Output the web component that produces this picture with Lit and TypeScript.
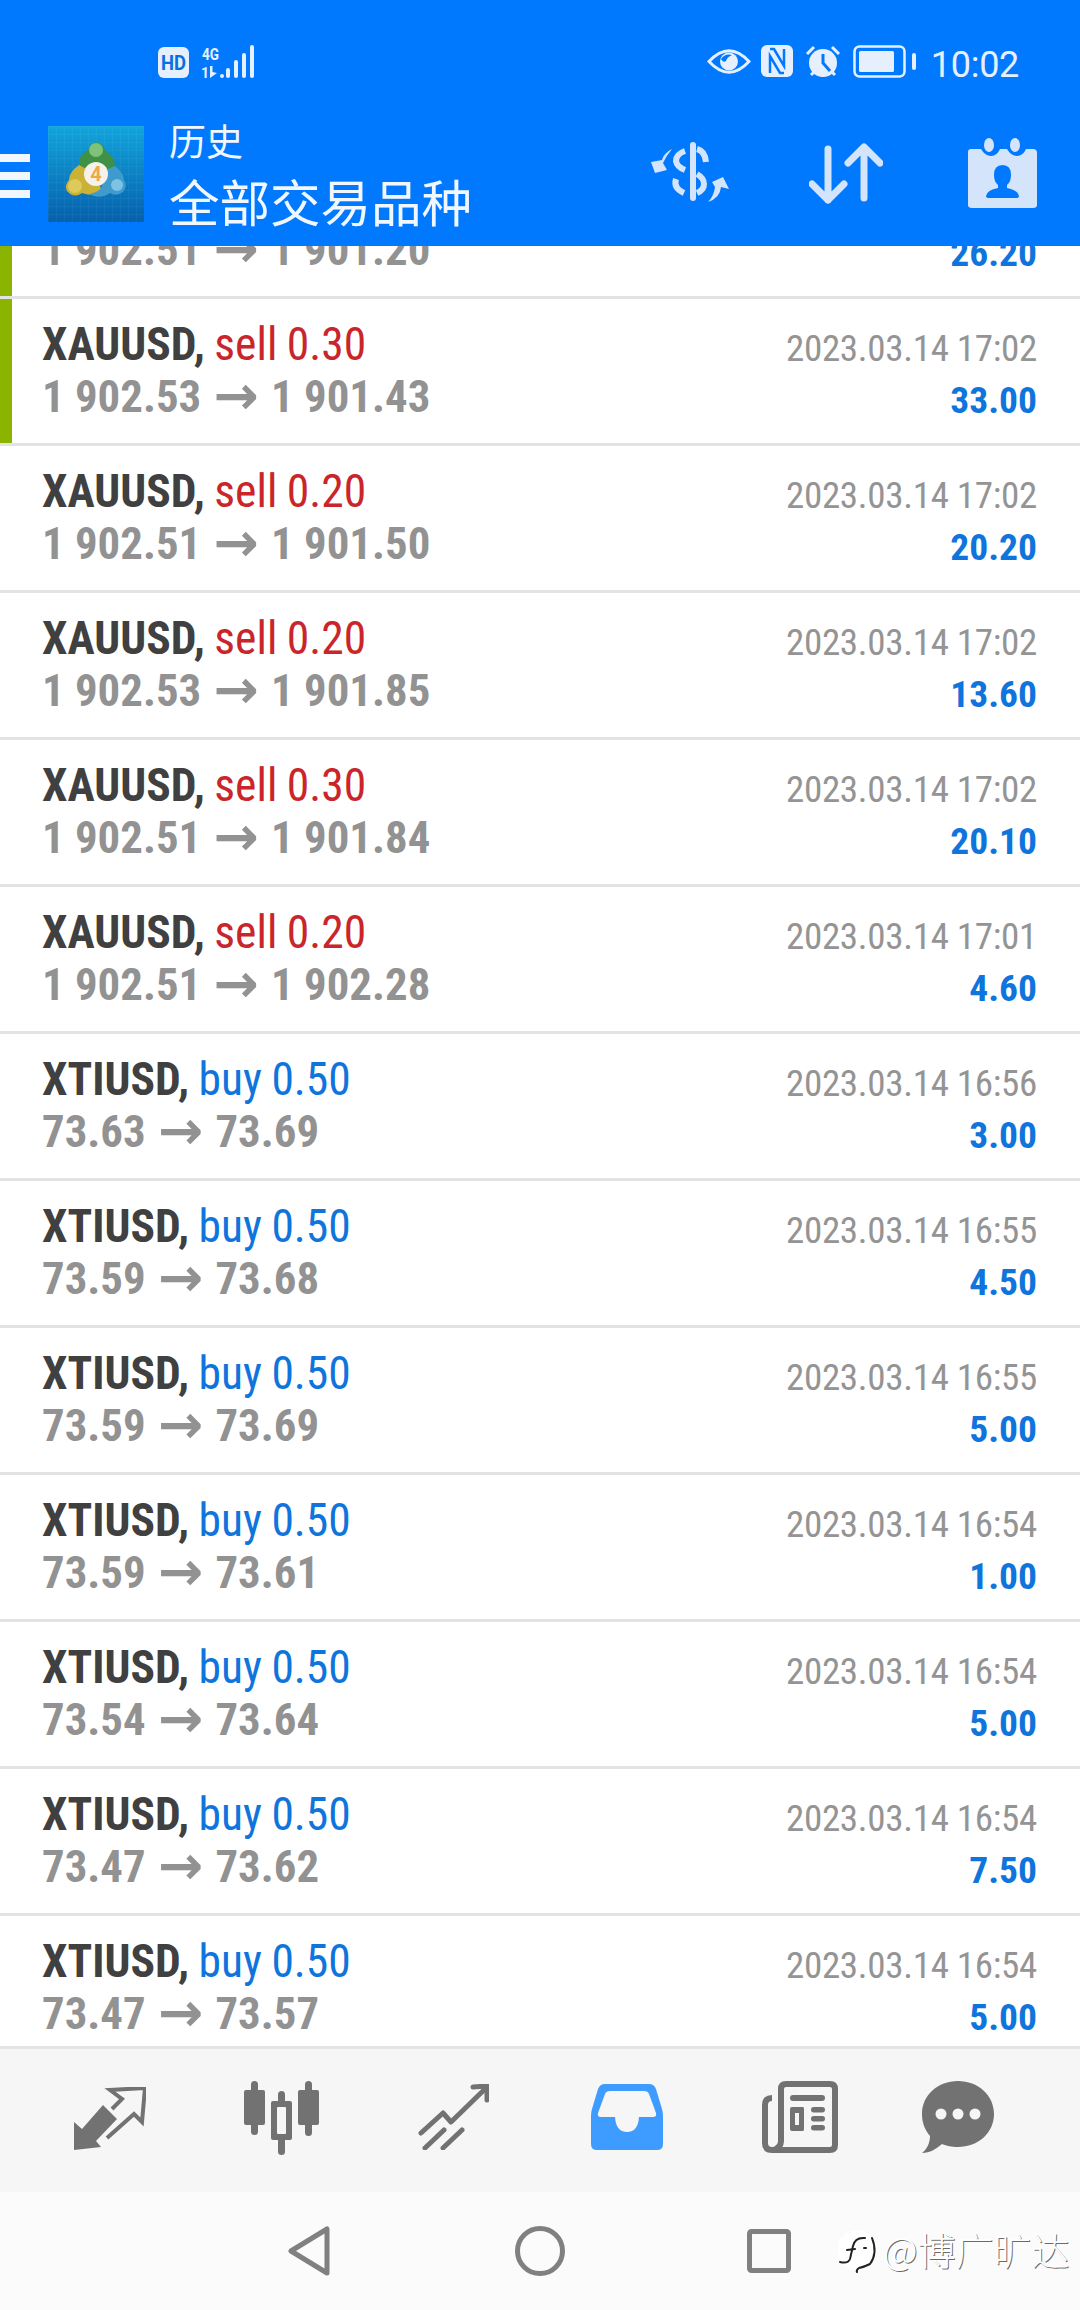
import { LitElement, html, css, svg } from "lit";
import { customElement } from "lit/decorators.js";
import { classMap } from "lit/directives/class-map.js";

type Deal = { sym: string; side: string; lot: string; from: string; to: string; time: string; profit: string; bar?: boolean };

const gold = (lot: string, from: string, to: string, time: string, profit: string, bar = false): Deal =>
  ({ sym: "XAUUSD", side: "sell", lot, from, to, time, profit, bar });
const oil = (from: string, to: string, time: string, profit: string): Deal =>
  ({ sym: "XTIUSD", side: "buy", lot: "0.50", from, to, time, profit });

const DEALS: Deal[] = [
  gold("0.20", "1 902.51", "1 901.20", "2023.03.14 17:02", "26.20", true),
  gold("0.30", "1 902.53", "1 901.43", "2023.03.14 17:02", "33.00", true),
  gold("0.20", "1 902.51", "1 901.50", "2023.03.14 17:02", "20.20"),
  gold("0.20", "1 902.53", "1 901.85", "2023.03.14 17:02", "13.60"),
  gold("0.30", "1 902.51", "1 901.84", "2023.03.14 17:02", "20.10"),
  gold("0.20", "1 902.51", "1 902.28", "2023.03.14 17:01", "4.60"),
  oil("73.63", "73.69", "2023.03.14 16:56", "3.00"),
  oil("73.59", "73.68", "2023.03.14 16:55", "4.50"),
  oil("73.59", "73.69", "2023.03.14 16:55", "5.00"),
  oil("73.59", "73.61", "2023.03.14 16:54", "1.00"),
  oil("73.54", "73.64", "2023.03.14 16:54", "5.00"),
  oil("73.47", "73.62", "2023.03.14 16:54", "7.50"),
  oil("73.47", "73.57", "2023.03.14 16:54", "5.00"),
];

const logo = html`<svg class="logo" width="96" height="96" viewBox="0 0 96 96">
  <defs>
    <linearGradient id="lg" x1="0" y1="0" x2="0" y2="1">
      <stop offset="0" stop-color="#12a5dc" /><stop offset="1" stop-color="#0560ad" />
    </linearGradient>
    <pattern id="lp" width="8" height="8" patternUnits="userSpaceOnUse">
      <path d="M8 0H0V8" fill="none" stroke="#fff" stroke-opacity=".08" />
    </pattern>
  </defs>
  <rect width="96" height="96" fill="url(#lg)" />
  <rect width="96" height="96" fill="url(#lp)" />
  <path d="M31 42 Q29 30 39 25 Q43 17 48 16 Q54 17 58 25 Q68 31 67 43 L48 50Z" fill="#3f9146" />
  <circle cx="48" cy="24" r="7" fill="#7fc27a" />
  <path d="M31 39 Q21 46 21 54 Q16 60 19 65 Q26 73 34 67 Q44 71 54 66 L48 48Z" fill="#c9b236" />
  <circle cx="27" cy="60" r="7" fill="#ddca58" />
  <path d="M67 40 Q75 46 76 54 Q80 60 75 66 Q68 71 62 67 Q52 74 41 68 Q52 66 54 60 L48 48Z" fill="#3f9bcc" />
  <circle cx="69" cy="59" r="6" fill="#7cc3e4" />
  <circle cx="48" cy="48" r="12" fill="#f6f1ea" />
  <text x="48" y="55" text-anchor="middle" font-family="Roboto, sans-serif" font-weight="700" font-size="20" fill="#eda94a">4</text>
</svg>`;

const dollarIcon = svg`
  <rect x="50" y="12" width="6" height="59" rx="3" />
  <g fill="none" stroke="currentColor" stroke-width="6">
    <path d="M45 21 Q36 24 36 31 Q37 37 45 40" />
    <path d="M57 19 Q65 21 66 32" />
    <path d="M57 44 Q64 48 64 54 Q64 60 57 63" />
    <path d="M36 49 Q33 58 44 63" />
  </g>
  <path d="M32 19 Q24 23 22 30 L11 32 L15 43 L27 40 L23 33 Q26 26 32 19Z" />
  <path d="M68 72 Q74 66 75 57 L72 52 L83 47 L89 59 L81 57 Q80 68 68 72Z" />`;

const calendarIcon = svg`
  <path d="M3 11 H13 Q17 18 23 18 Q29 18 32 11 H39 Q43 18 49 18 Q55 18 58 11 H65 Q69 11 69 15 V67 Q69 70 65 70 H4 Q0 70 0 67 V14 Q0 11 3 11Z" />
  <ellipse cx="21" cy="7" rx="5" ry="7" />
  <ellipse cx="47" cy="7" rx="5" ry="7" />
  <path fill="#0079ff" d="M34.500 27 Q43 27 43 37 Q43 44 39 47 L39 50 Q50 52 51 58 Q51 60 49 60 H20 Q18 60 18 58 Q19 52 30 50 L30 47 Q26 44 26 37 Q26 27 34.500 27Z" />`;

const tabExchange = svg`
  <path fill="#727272" d="M0 35 L8 42 L29 18 L43 32 L22 54 L27 60 L0 63Z" />
  <path fill="none" stroke="#727272" stroke-width="4" d="M38 22 L48 12 L36 3 L71 1 L68 35 L60 27 L33 51" />`;

const tabCandles = svg`
  <rect x="7" y="0" width="7" height="54" rx="3.500" fill="#727272" />
  <rect x="0" y="9" width="21" height="35" rx="2" fill="#727272" />
  <rect x="34" y="10" width="7" height="64" rx="3.500" fill="#727272" />
  <rect x="27" y="20" width="21" height="39" rx="2" fill="#727272" />
  <rect x="33" y="26" width="9" height="27" rx="1" fill="#f6f6f6" />
  <rect x="61" y="0" width="7" height="55" rx="3.500" fill="#727272" />
  <rect x="54" y="9" width="21" height="35" rx="2" fill="#727272" />`;

const tabTrend = svg`
  <g fill="none" stroke="#727272" stroke-width="5" stroke-linecap="round" stroke-linejoin="round">
    <path d="M3 49 L25 29 L33 38 L67 5" />
    <path d="M55 3 L69 2 L69 16" />
    <path d="M7 64 L26 46" />
    <path d="M25 64 L44 46" />
  </g>`;

const tabInbox = svg`
  <path fill="#3e9bff" d="M14 0 H58 Q63 0 65 5 L71 25 Q72 28 72 32 V60 Q72 66 66 66 H6 Q0 66 0 60 V32 Q0 28 1 25 L7 5 Q9 0 14 0Z" />
  <path fill="#f6f6f6" d="M19 7 H53 Q57 7 58 10 L65 29 Q66 33 62 33 H48 Q47 48 36 48 Q25 48 24 33 H10 Q6 33 7 29 L14 10 Q15 7 19 7Z" />`;

const tabNews = svg`
  <g fill="none" stroke="#727272" stroke-width="6">
    <path d="M10 17 Q3 17 3 24 V62 Q3 69 10 69 H68 Q73 69 73 64 V8 Q73 3 68 3 H24 Q19 3 19 8 V60 Q19 66 12 69" />
  </g>
  <g fill="#727272">
    <rect x="28" y="14" width="35" height="6" rx="3" />
    <path fill-rule="evenodd" d="M30 26 H41 Q42 26 42 28 V48 Q42 50 41 50 H30 Q28 50 28 48 V28 Q28 26 30 26Z M33 32 V44 H37 V32Z" />
    <rect x="49" y="26" width="14" height="5.500" rx="2.700" />
    <rect x="49" y="35" width="14" height="5.500" rx="2.700" />
    <rect x="49" y="44" width="14" height="5.500" rx="2.700" />
  </g>`;

const tabChat = svg`
  <path fill="#727272" d="M36 0 C56 0 72 14 72 33 C72 52 56 66 36 66 C29 66 25 65 20 63 C14 68 8 72 0 72 C5 68 8 62 8 55 C3 49 0 42 0 33 C0 14 16 0 36 0Z" />
  <circle cx="19" cy="33" r="5.500" fill="#f6f6f6" />
  <circle cx="36" cy="33" r="5.500" fill="#f6f6f6" />
  <circle cx="53" cy="33" r="5.500" fill="#f6f6f6" />`;

@customElement("app-root")
export class AppRoot extends LitElement {
  static styles = css`
    :host {
      display: flex;
      flex-direction: column;
      width: 1080px;
      height: 2310px;
      position: relative;
      overflow: hidden;
      background: #fff;
      font-family: Roboto, "Noto Sans CJK SC", sans-serif;
    }
    svg { display: block; flex: none; }

    .top { background: #0079ff; height: 246px; flex: none; position: relative; z-index: 1; }
    .status { height: 105px; display: flex; align-items: flex-start; padding: 45px 61px 0 158px; box-sizing: border-box; color: #e6f0fd; }
    .status .left { display: flex; gap: 12px; }
    .status .right { margin-left: auto; display: flex; }
    .time { font-size: 36px; line-height: 36px; margin: 2px 0 0 14px; font-weight: 400; color: #e6f0fd; letter-spacing: -0.3px; }

    .bar { display: flex; height: 141px; align-items: flex-start; }
    .burger { width: 30px; margin-top: 49px; display: flex; flex-direction: column; gap: 10px; flex: none; }
    .burger i { height: 8px; background: #f1f7ff; display: block; }
    .logo { margin: 21px 0 0 18px; }
    .titles { margin-left: 25px; color: #f1f7ff; font-family: "Noto Sans CJK SC", sans-serif; }
    .t1 { font-size: 37px; line-height: 44px; margin-top: 13px; }
    .t2 { font-size: 50.500px; line-height: 60px; margin-top: 8px; }
    .actions { margin-left: auto; padding: 33px 43px 0 0; display: flex; color: #d3e4fb; fill: currentColor; }

    .list { flex: 1; min-height: 0; overflow: hidden; }
    .rows { margin-top: -94px; }
    .row { height: 147px; box-sizing: border-box; border-bottom: 3px solid #e3e3e3; padding: 20px 43px 0 42px; position: relative; display: flex; justify-content: space-between; }
    .mark { position: absolute; left: 0; top: 0; bottom: 0; width: 12px; background: #8ab400; }
    .col { display: flex; flex-direction: column; }
    .col.end { align-items: flex-end; margin-top: 3px; }
    .line { height: 52px; line-height: 52px; white-space: nowrap; font-stretch: 75%; }
    .head { font-size: 45.500px; word-spacing: -1px; }
    .name { font-weight: 700; color: #404040; }
    .sell { color: #c9252a; }
    .buy { color: #0f75dc; }
    .price { font-size: 44.800px; font-weight: 700; color: #929292; }
    .arrow { font-family: "DejaVu Sans", sans-serif; font-size: 54px; font-stretch: 100%; margin: 0 2px; vertical-align: -2px; line-height: 0; }
    .date { font-size: 37px; color: #949494; letter-spacing: -0.3px; position: relative; top: 1px; }
    .profit { font-size: 37.500px; font-weight: 700; color: #0f75dc; }

    .tabs { height: 146px; flex: none; box-sizing: border-box; border-top: 3px solid #e3e3e3; background: #f6f6f6; display: flex; padding: 32px 0 0 74px; align-items: flex-start; position: relative; z-index: 1; }
    .nav { height: 118px; flex: none; background: #fbfbfb; display: flex; align-items: center; padding: 0 0 0 288px; }

    .mark-wm { position: absolute; left: 838px; top: 2226px; display: flex; align-items: flex-start; gap: 3px; color: #fff; font-size: 38px; line-height: 46px; font-family: "Noto Sans CJK SC", sans-serif; font-weight: 300; text-shadow: 1px 1px 0 rgba(60, 60, 60, 0.75); white-space: nowrap; }
  `;

  renderRow(d: Deal) {
    return html`<div class="row">
      ${d.bar ? html`<div class="mark"></div>` : ""}
      <div class="col">
        <div class="line head"><span class="name">${d.sym},</span> <span class=${classMap({ sell: d.side === "sell", buy: d.side === "buy" })}>${d.side} ${d.lot}</span></div>
        <div class="line price">${d.from} <span class="arrow">→</span> ${d.to}</div>
      </div>
      <div class="col end">
        <div class="line date">${d.time}</div>
        <div class="line profit">${d.profit}</div>
      </div>
    </div>`;
  }

  render() {
    return html`
      <div class="top">
        <div class="status">
          <div class="left">
            <svg width="31" height="31" viewBox="0 0 31 31" style="margin-top:2px">
              <rect width="31" height="31" rx="6" fill="#e6f0fd" />
              <text x="15.500" y="23" text-anchor="middle" font-family="Roboto, sans-serif" font-weight="700" font-size="21" fill="#0a6fe0" textLength="25" lengthAdjust="spacingAndGlyphs">HD</text>
            </svg>
            <svg width="54" height="33" viewBox="0 0 54 33">
              <text x="1" y="15" font-family="Roboto, sans-serif" font-weight="700" font-size="17" fill="#e6f0fd" textLength="17" lengthAdjust="spacingAndGlyphs">4G</text>
              <text x="0" y="33" font-family="Roboto, sans-serif" font-weight="700" font-size="14" fill="#e6f0fd">1</text>
              <path d="M9 21 V33 L16 28 L11.500 27 V21Z" fill="#e6f0fd" />
              <rect x="19" y="29" width="4" height="4" rx="2" fill="#e6f0fd" />
              <rect x="25" y="23" width="4" height="10" rx="2" fill="#e6f0fd" />
              <rect x="33" y="15" width="4" height="18" rx="2" fill="#e6f0fd" />
              <rect x="41" y="8" width="4" height="25" rx="2" fill="#e6f0fd" />
              <rect x="49" y="0" width="4" height="33" rx="2" fill="#e6f0fd" />
            </svg>
          </div>
          <div class="right">
            <svg width="44" height="27" viewBox="0 0 44 27" style="margin-top:3px">
              <path d="M2 13.500 Q22 -8 42 13.500 Q22 35 2 13.500Z" fill="none" stroke="#e6f0fd" stroke-width="3" />
              <circle cx="22" cy="13.500" r="9" fill="#e6f0fd" />
              <path d="M14 11 Q18 5 25 7 Q20 9 19 13 Q16 15 14 11Z" fill="#0079ff" />
            </svg>
            <svg width="32" height="32" viewBox="0 0 32 32" style="margin-left:10px">
              <rect width="32" height="32" rx="6" fill="#e6f0fd" />
              <path d="M9 4 H13 L23 21 V4 M9 28 V11 L19 28 H23" fill="none" stroke="#0079ff" stroke-width="2.500" />
            </svg>
            <svg width="36" height="33" viewBox="0 0 36 33" style="margin-left:12px">
              <circle cx="18" cy="18" r="14" fill="#e6f0fd" />
              <path d="M18 9 V18 L25 26" fill="none" stroke="#0079ff" stroke-width="3" />
              <path d="M2 9 L9 2 M34 9 L27 2 M6 30 L9 27 M30 30 L27 27" stroke="#e6f0fd" stroke-width="3" />
            </svg>
            <svg width="64" height="33" viewBox="0 0 64 33" style="margin-left:12px">
              <rect x="1.500" y="1.500" width="50" height="30" rx="5" fill="none" stroke="#e6f0fd" stroke-width="2.500" />
              <rect x="6" y="6" width="35" height="21" rx="1.500" fill="#e6f0fd" />
              <rect x="59" y="8" width="4" height="17" rx="2" fill="#e6f0fd" />
            </svg>
            <div class="time">10:02</div>
          </div>
        </div>
        <div class="bar">
          <div class="burger"><i></i><i></i><i></i></div>
          ${logo}
          <div class="titles">
            <div class="t1">历史</div>
            <div class="t2">全部交易品种</div>
          </div>
          <div class="actions">
            <svg width="100" height="80" viewBox="0 0 100 80" fill="currentColor" style="margin-top:-8px">${dollarIcon}</svg>
            <svg width="74" height="63" viewBox="0 0 74 63" style="margin:4px 0 0 69px">
              <g fill="none" stroke="currentColor" stroke-width="7" stroke-linecap="round" stroke-linejoin="round">
                <path d="M19 7 V58 M3 42 L19 58 L35 42" />
                <path d="M55 56 V5 M39 21 L55 5 L71 21" />
              </g>
            </svg>
            <svg width="69" height="70" viewBox="0 0 69 70" fill="currentColor" style="margin-left:85px">${calendarIcon}</svg>
          </div>
        </div>
      </div>

      <div class="list">
        <div class="rows">${DEALS.map((d) => this.renderRow(d))}</div>
      </div>

      <div class="tabs">
        <svg width="72" height="63" viewBox="0 0 72 63" style="margin-top:6px">${tabExchange}</svg>
        <svg width="75" height="74" viewBox="0 0 75 74" style="margin-left:98px">${tabCandles}</svg>
        <svg width="71" height="66" viewBox="0 0 71 66" style="margin:3px 0 0 99px">${tabTrend}</svg>
        <svg width="72" height="66" viewBox="0 0 72 66" style="margin:3px 0 0 102px">${tabInbox}</svg>
        <svg width="76" height="72" viewBox="0 0 76 72" style="margin-left:99px">${tabNews}</svg>
        <svg width="72" height="72" viewBox="0 0 72 72" style="margin-left:84px">${tabChat}</svg>
      </div>

      <div class="nav">
        <svg width="42" height="50" viewBox="0 0 42 50">
          <path d="M3 25 L39 3 V47Z" fill="none" stroke="#808080" stroke-width="5" stroke-linejoin="round" />
        </svg>
        <svg width="50" height="50" viewBox="0 0 50 50" style="margin-left:185px">
          <circle cx="25" cy="25" r="22.500" fill="none" stroke="#808080" stroke-width="5" />
        </svg>
        <svg width="44" height="44" viewBox="0 0 44 44" style="margin-left:182px">
          <rect x="2.500" y="2.500" width="39" height="39" rx="2" fill="none" stroke="#808080" stroke-width="5" />
        </svg>
      </div>

      <div class="mark-wm">
        <svg width="42" height="48" viewBox="0 0 42 48">
          <circle cx="19" cy="24" r="20" fill="#fff" />
          <g fill="none" stroke="#222" stroke-width="2" stroke-linecap="round">
            <path d="M27 12 Q17 11 15 20 L12 33 Q10 38 2 36" />
            <path d="M9 24 L17 23" />
            <path d="M26 22 H28" />
            <path d="M34 12 Q40 27 32 38 Q26 41 21 42 Q18 44 19 46" />
          </g>
        </svg>
        <span>@博广旷达</span>
      </div>
    `;
  }
}
